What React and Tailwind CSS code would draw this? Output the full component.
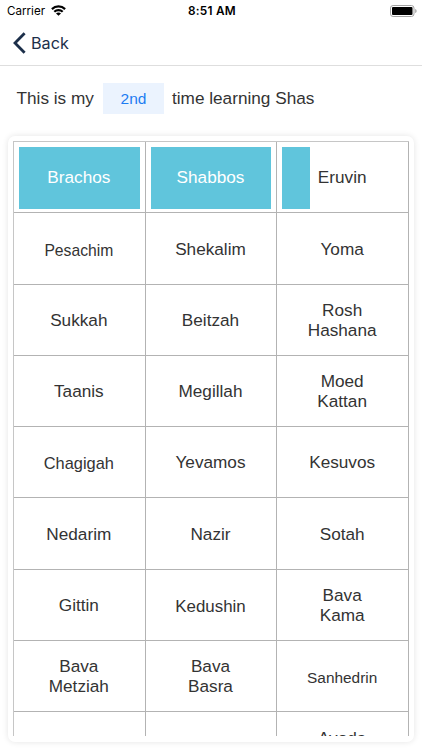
import { clsx } from 'clsx';

const rows = [
  [{ name: 'Brachos', progress: 100 }, { name: 'Shabbos', progress: 100 }, { name: 'Eruvin', progress: 22.7 }],
  [{ name: 'Pesachim', size: 'text-[15.7px] pt-[2px]' }, { name: 'Shekalim' }, { name: 'Yoma' }],
  [{ name: 'Sukkah' }, { name: 'Beitzah' }, { name: 'Rosh Hashana' }],
  [{ name: 'Taanis' }, { name: 'Megillah' }, { name: 'Moed Kattan' }],
  [{ name: 'Chagigah', size: 'text-[16.4px] pt-[2px]' }, { name: 'Yevamos' }, { name: 'Kesuvos' }],
  [{ name: 'Nedarim' }, { name: 'Nazir' }, { name: 'Sotah' }],
  [{ name: 'Gittin' }, { name: 'Kedushin', size: 'text-[16.9px] pt-[2px]' }, { name: 'Bava Kama' }],
  [{ name: 'Bava Metziah' }, { name: 'Bava Basra' }, { name: 'Sanhedrin', size: 'text-[15.4px] pt-[2px]' }],
  [{ name: '' }, { name: '' }, { name: 'Avoda Zara' }],
];

function StatusBar() {
  return (
    <div className="grid h-[22px] grid-cols-3 items-center pl-[7px] pr-[5px] text-[11.6px] text-black">
      <div className="flex items-center gap-[6px]">
        <span className="pt-px">Carrier</span>
        <svg width="15" height="11" viewBox="0 0 15 11" fill="none" stroke="currentColor" strokeWidth="2.2">
          <path d="M0.9 4.1C4.6 0.5 10.4 0.5 14.1 4.1" />
          <path d="M3.3 6.800C5.600 4.600 9.400 4.600 11.700 6.800" />
          <path d="M7.500 10.800 5 8.500C6.400 7.200 8.600 7.200 10 8.500Z" fill="currentColor" stroke="none" />
        </svg>
      </div>
      <span className="pt-px text-center text-[11.8px] font-semibold tracking-[0.25px]">8:51 AM</span>
      <svg className="justify-self-end" width="27" height="12" viewBox="0 0 27 12">
        <rect x="0.5" y="0.5" width="23.5" height="11" rx="2.6" fill="none" stroke="#a3a3a3" />
        <rect x="2" y="2" width="20.5" height="8" rx="1" fill="#000" />
        <path d="M25.2 4v4c1-.4 1.4-1.1 1.4-2s-.4-1.600-1.400-2Z" fill="#a3a3a3" />
      </svg>
    </div>
  );
}

function Cell({ name, size, progress }) {
  return (
    <div className="grid h-full border-b border-r border-[#b3b3b3] p-[5px] pb-[3px]">
      <div className="col-start-1 row-start-1">
        {progress && <div className="h-full bg-[#60c5dc]" style={{ width: `${progress}%` }} />}
      </div>
      <div className="col-start-1 row-start-1 flex justify-center pr-px">
        <div
          className={clsx(
            'flex w-[72px] items-center justify-center text-center leading-[19.5px]',
            size || 'text-[17.2px]',
            progress === 100 ? 'text-white' : 'text-[#333]'
          )}
        >
          {name}
        </div>
      </div>
    </div>
  );
}

export default function App() {
  return (
    <div className="flex h-[750px] w-[422px] flex-col overflow-hidden bg-white font-['Inter',sans-serif]">
      <header className="h-[66px] shrink-0 border-b border-[#dedede]">
        <StatusBar />
        <button className="flex h-[42px] items-center gap-[5px] pl-[13px] text-[16.2px] text-[#1c2f4a]">
          <svg width="13" height="22" viewBox="0 0 13 22" fill="none" stroke="currentColor" strokeWidth="2.8">
            <path d="M11.6 1.200 2 11l9.600 9.800" />
          </svg>
          Back
        </button>
      </header>

      <main className="flex flex-1 flex-col font-['Liberation_Sans',Arial,sans-serif] text-[17.2px] text-[#333]">
        <div className="mt-[17px] flex h-[31px] items-center pl-[16.5px]">
          <span className="w-[86.500px]">This is my</span>
          <span className="mr-[8px] flex h-full w-[61px] items-center justify-center bg-[#ebf3fe] text-[15.5px] text-[#1d7cf2]">
            2nd
          </span>
          <span>time learning Shas</span>
        </div>

        <section className="mx-[8px] mt-[22px] h-[606px] rounded-[7px] bg-white px-[5px] py-[5px] shadow-[0_0_6px_rgba(0,0,0,0.11)]">
          <div className="h-[595px] overflow-hidden border-l border-t border-[#c6c6c6]">
            {rows.map((row, i) => (
              <div key={i} className="grid h-[71.25px] grid-cols-3">
                {row.map((cell, j) => (
                  <Cell key={j} {...cell} />
                ))}
              </div>
            ))}
          </div>
        </section>
      </main>
    </div>
  );
}
